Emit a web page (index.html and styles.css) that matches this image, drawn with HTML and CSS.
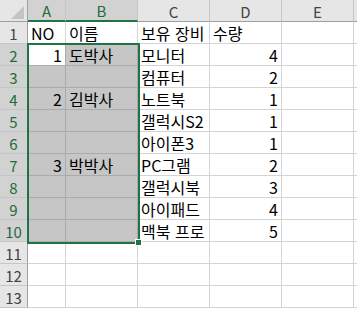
FILE: index.html
```html
<!DOCTYPE html>
<html lang="ko">
<head>
  <meta charset="UTF-8">
  <title>시트</title>
  <link rel="stylesheet" href="styles.css">
</head>
<body>

  <div class="hoja">
    <!-- encabezado de columnas -->
    <div class="esquina"><span class="triangulo"></span></div>
    <div class="col-cab activo">A</div>
    <div class="col-cab activo">B</div>
    <div class="col-cab">C</div>
    <div class="col-cab">D</div>
    <div class="col-cab">E</div>
    <div class="col-cab resto"></div>

    <div class="fila-cab">1</div>
    <div class="celda">NO</div>
    <div class="celda">이름</div>
    <div class="celda">보유 장비</div>
    <div class="celda">수량</div>
    <div class="celda"></div>
    <div class="celda resto"></div>

    <div class="fila-cab activo">2</div>
    <div class="celda num sel activa">1</div>
    <div class="celda sel">도박사</div>
    <div class="celda">모니터</div>
    <div class="celda num">4</div>
    <div class="celda"></div>
    <div class="celda resto"></div>

    <div class="fila-cab activo">3</div>
    <div class="celda sel"></div>
    <div class="celda sel"></div>
    <div class="celda">컴퓨터</div>
    <div class="celda num">2</div>
    <div class="celda"></div>
    <div class="celda resto"></div>

    <div class="fila-cab activo">4</div>
    <div class="celda num sel">2</div>
    <div class="celda sel">김박사</div>
    <div class="celda">노트북</div>
    <div class="celda num">1</div>
    <div class="celda"></div>
    <div class="celda resto"></div>

    <div class="fila-cab activo">5</div>
    <div class="celda sel"></div>
    <div class="celda sel"></div>
    <div class="celda">갤럭시S2</div>
    <div class="celda num">1</div>
    <div class="celda"></div>
    <div class="celda resto"></div>

    <div class="fila-cab activo">6</div>
    <div class="celda sel"></div>
    <div class="celda sel"></div>
    <div class="celda">아이폰3</div>
    <div class="celda num">1</div>
    <div class="celda"></div>
    <div class="celda resto"></div>

    <div class="fila-cab activo">7</div>
    <div class="celda num sel">3</div>
    <div class="celda sel">박박사</div>
    <div class="celda">PC그램</div>
    <div class="celda num">2</div>
    <div class="celda"></div>
    <div class="celda resto"></div>

    <div class="fila-cab activo">8</div>
    <div class="celda sel"></div>
    <div class="celda sel"></div>
    <div class="celda">갤럭시북</div>
    <div class="celda num">3</div>
    <div class="celda"></div>
    <div class="celda resto"></div>

    <div class="fila-cab activo">9</div>
    <div class="celda sel"></div>
    <div class="celda sel"></div>
    <div class="celda">아이패드</div>
    <div class="celda num">4</div>
    <div class="celda"></div>
    <div class="celda resto"></div>

    <div class="fila-cab activo">10</div>
    <div class="celda sel"></div>
    <div class="celda sel"></div>
    <div class="celda">맥북 프로</div>
    <div class="celda num">5</div>
    <div class="celda"></div>
    <div class="celda resto"></div>

    <div class="fila-cab">11</div>
    <div class="celda"></div>
    <div class="celda"></div>
    <div class="celda"></div>
    <div class="celda"></div>
    <div class="celda"></div>
    <div class="celda resto"></div>

    <div class="fila-cab">12</div>
    <div class="celda"></div>
    <div class="celda"></div>
    <div class="celda"></div>
    <div class="celda"></div>
    <div class="celda"></div>
    <div class="celda resto"></div>

    <div class="fila-cab">13</div>
    <div class="celda"></div>
    <div class="celda"></div>
    <div class="celda"></div>
    <div class="celda"></div>
    <div class="celda"></div>
    <div class="celda resto"></div>

    <!-- marco de la selección A2:B10 -->
    <div class="seleccion"><span class="asa"></span></div>
  </div>

</body>
</html>
```

FILE: styles.css
```css
body {
  margin: 0;
  background: #ffffff;
  font-family: "Noto Sans CJK KR", "Noto Sans", sans-serif;
}

.hoja {
  position: relative;
  display: grid;
  grid-template-columns: 28px 38px 72px 72px 72px 72px 1fr;
  grid-auto-rows: 22px;
  width: 357px;
  height: 309px;
  overflow: hidden;
}

.esquina, .col-cab, .fila-cab {
  background: #e6e6e6;
  color: #444444;
  font-size: 15px;
  box-sizing: border-box;
  display: flex;
  align-items: center;
  justify-content: center;
}

.esquina {
  position: relative;
  border-right: 1px solid #9f9f9f;
  border-bottom: 1px solid #9f9f9f;
}

.triangulo {
  position: absolute;
  right: 3px;
  bottom: 2px;
  width: 13px;
  height: 13px;
  background: #c4c4c4;
  clip-path: polygon(100% 0, 100% 100%, 0 100%);
}

.col-cab {
  border-right: 1px solid #c6c6c6;
  border-bottom: 1px solid #9f9f9f;
  padding-top: 1px;
}

.col-cab.activo {
  background: #d2d2d2;
  color: #1e6b41;
  border-bottom: 2px solid #217346;
}

.fila-cab {
  border-right: 1px solid #9f9f9f;
  border-bottom: 1px solid #c6c6c6;
  padding-top: 1px;
}

.fila-cab.activo {
  background: #d2d2d2;
  color: #1e6b41;
}

.celda {
  box-sizing: border-box;
  border-right: 1px solid #d4d4d4;
  border-bottom: 1px solid #d4d4d4;
  font-size: 16px;
  line-height: 22px;
  padding: 0 3px;
  color: #000000;
  white-space: nowrap;
  overflow: hidden;
}

.celda.num {
  text-align: right;
}

.celda.sel {
  background: #c6c6c6;
  border-color: #ababab;
}

.celda.sel.activa {
  background: #ffffff;
}

.resto {
  border-right: none;
}

.seleccion {
  position: absolute;
  left: 27px;
  top: 43px;
  width: 113px;
  height: 201px;
  box-sizing: border-box;
  border: 2px solid #217346;
}

.asa {
  position: absolute;
  right: -4px;
  bottom: -4px;
  width: 5px;
  height: 5px;
  background: #217346;
  border: 1px solid #ffffff;
}
```
